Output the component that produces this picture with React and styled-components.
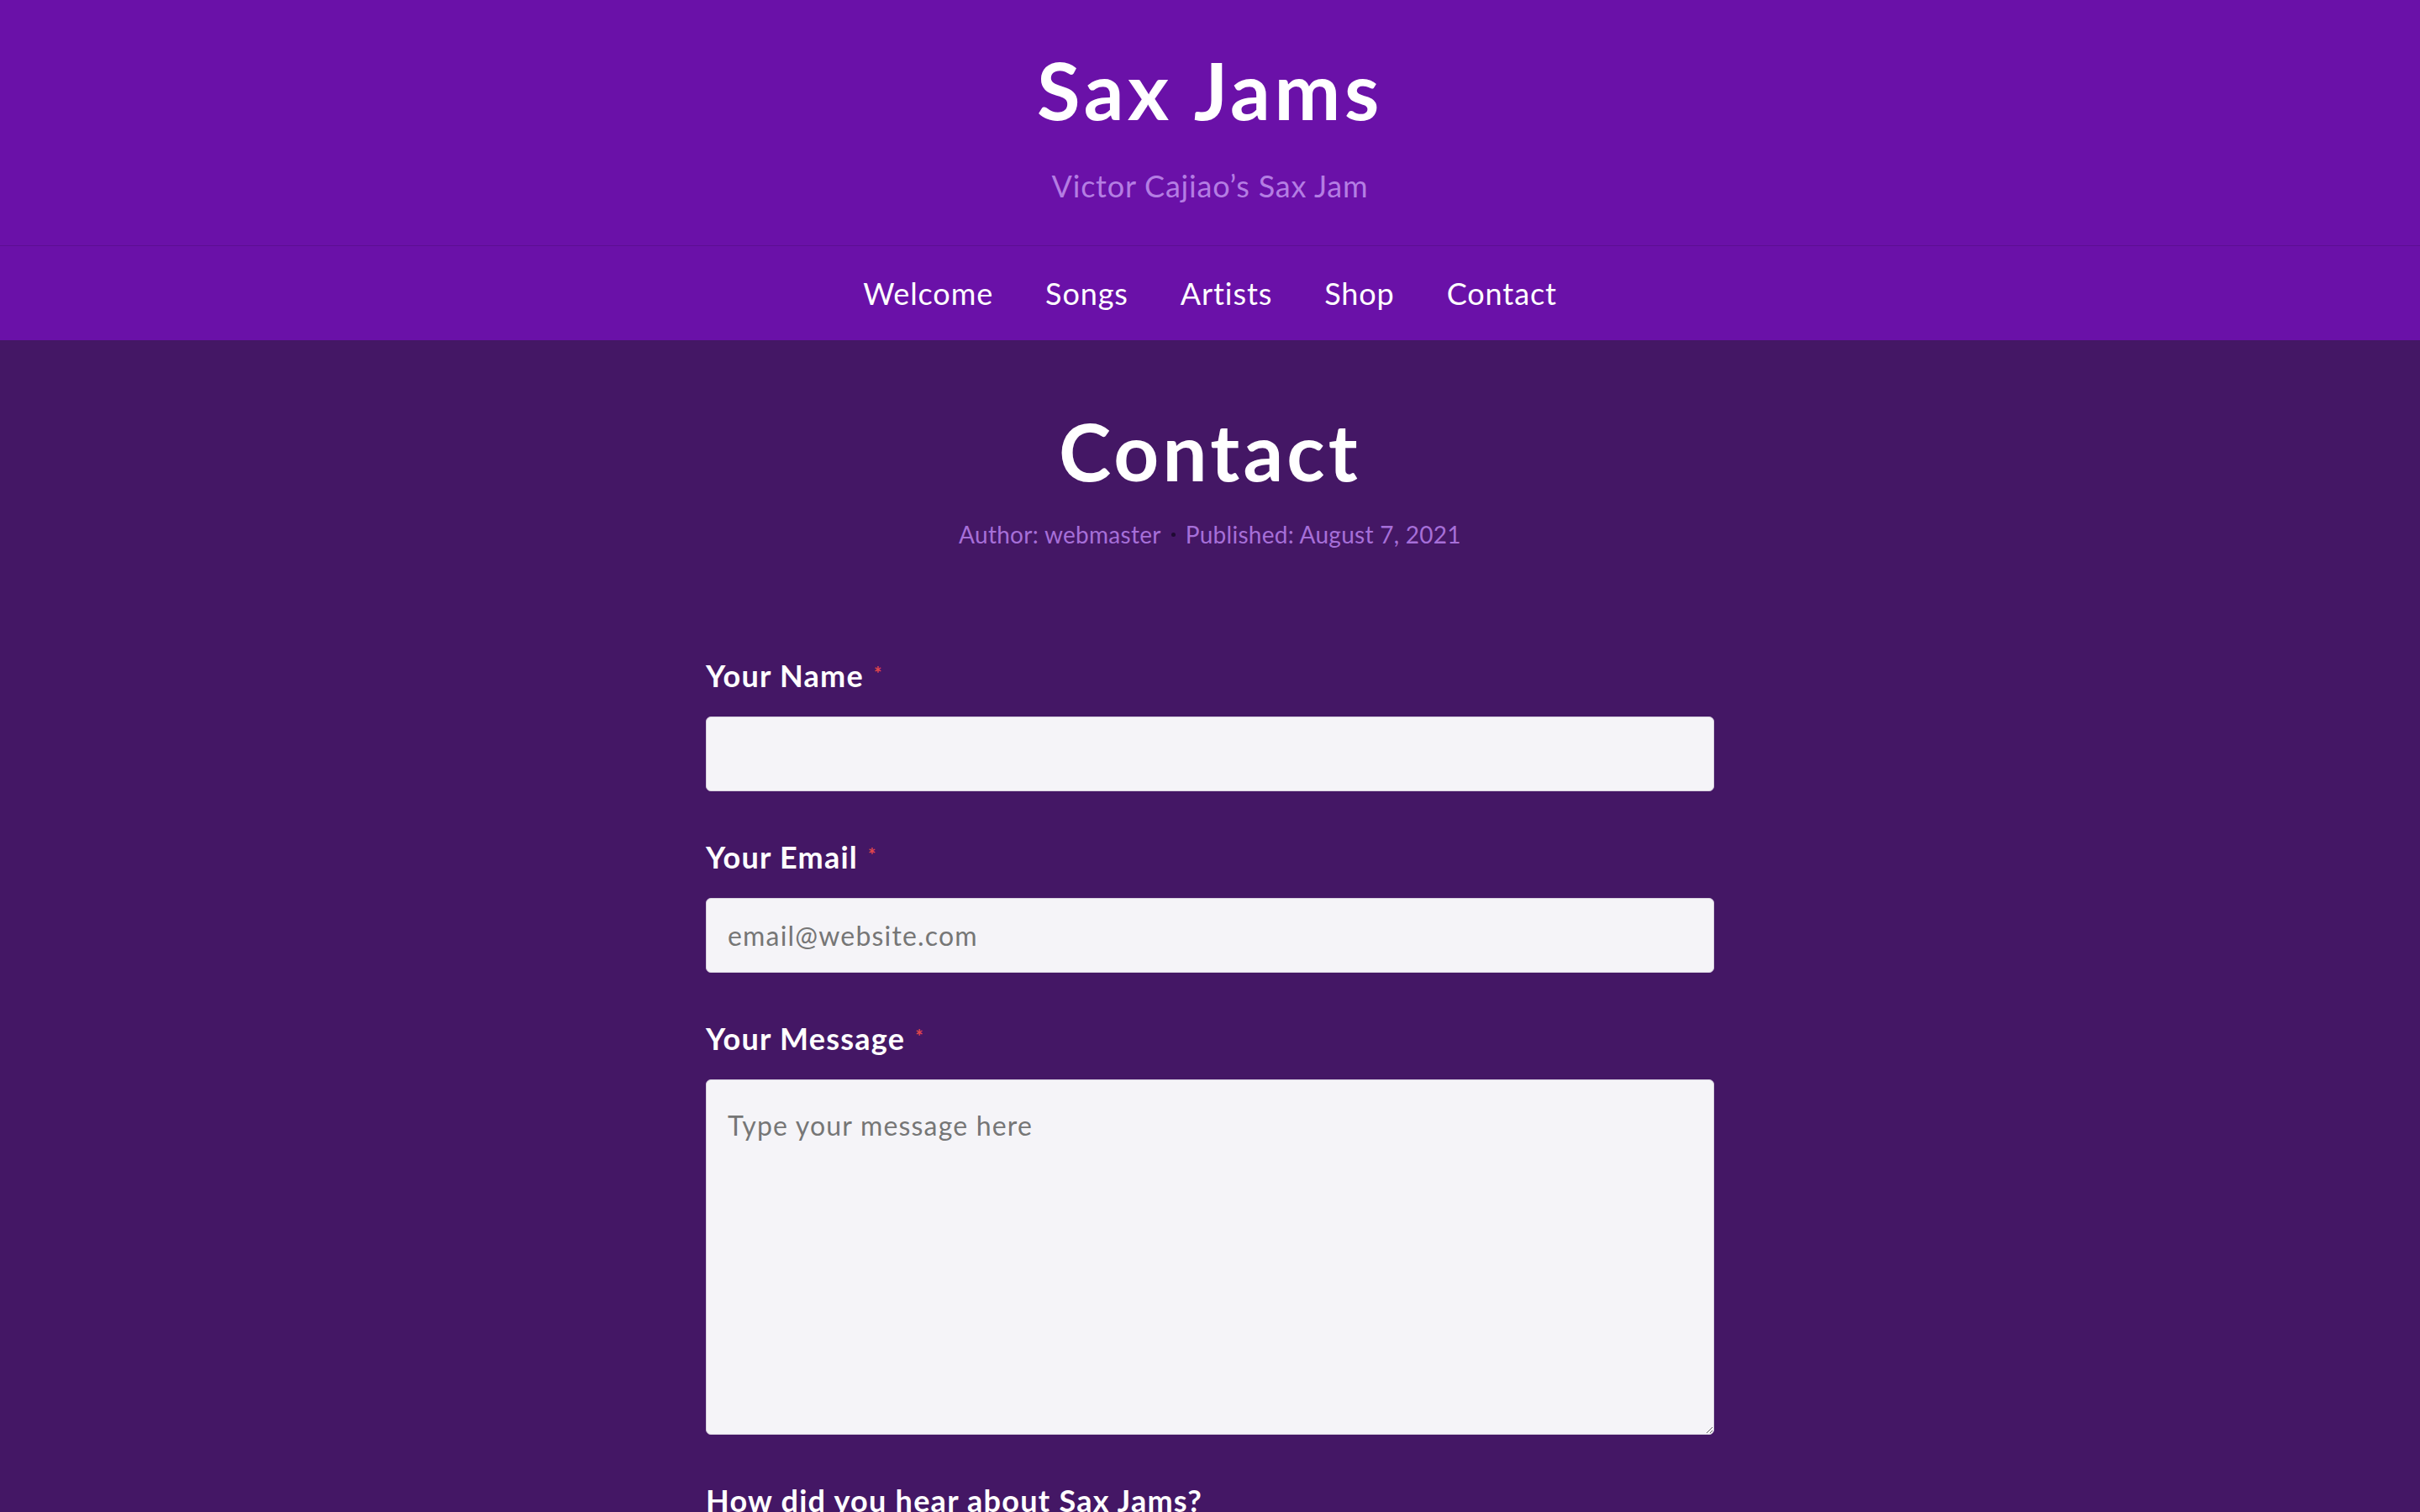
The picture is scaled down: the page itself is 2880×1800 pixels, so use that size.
import React from "react";
import styled, { createGlobalStyle } from "styled-components";

const Global = createGlobalStyle`
  html, body { margin: 0; padding: 0; }
  body {
    background: #441765;
    font-family: Lato, "Open Sans", sans-serif;
    color: #ffffff;
  }
  * { box-sizing: border-box; }
`;

const Header = styled.header`
  background: #6a11a8;
  text-align: center;
  padding: 50px 0 44px;
  border-bottom: 1px solid #5c0e92;
`;

const SiteTitle = styled.h1`
  margin: 0;
  font-size: 94px;
  line-height: 113px;
  font-weight: 700;
  letter-spacing: 0.05em;
  color: #ffffff;
`;

const Tagline = styled.p`
  margin: 31px 0 0;
  font-size: 36px;
  line-height: 54px;
  font-weight: 400;
  letter-spacing: 0.022em;
  color: #b47de3;
`;

const Nav = styled.nav`
  background: #6a11a8;
  display: flex;
  justify-content: center;
  gap: 62px;
  padding: 29px 0;
`;

const NavLink = styled.a`
  font-size: 36px;
  line-height: 54px;
  letter-spacing: 0.025em;
  color: #ffffff;
  text-decoration: none;
`;

const Main = styled.main`
  width: 1200px;
  margin: 0 auto;
  padding: 75px 0 120px;
`;

const PageTitle = styled.h2`
  margin: 0;
  text-align: center;
  font-size: 94px;
  line-height: 113px;
  font-weight: 700;
  letter-spacing: 0.045em;
`;

const Meta = styled.div`
  margin-top: 22px;
  display: flex;
  justify-content: center;
  align-items: center;
  gap: 12px;
  font-size: 28px;
  line-height: 42px;
  letter-spacing: 0.01em;
  color: #a66fd8;
`;

const Dot = styled.span`
  width: 5px;
  height: 5px;
  border-radius: 50%;
  background: #1f0a33;
`;

const Form = styled.form`
  margin-top: 120px;
  display: flex;
  flex-direction: column;
`;

const Field = styled.div`
  display: flex;
  flex-direction: column;
  margin-bottom: 51px;
`;

const Label = styled.label`
  font-size: 36px;
  line-height: 54px;
  font-weight: 700;
  letter-spacing: 0.035em;
  color: #ffffff;
  margin-bottom: 22px;
`;

const Req = styled.span`
  color: #e2474b;
  font-size: 22px;
  line-height: 22px;
  vertical-align: 8px;
  margin-left: 12px;
`;

const fieldBase = `
  width: 100%;
  border: 1px solid #d9d3e0;
  border-radius: 6px;
  background: #f5f4f8;
  font-family: Lato, "Open Sans", sans-serif;
  font-size: 32px;
  letter-spacing: 0.037em;
  color: #333;
  outline: none;
`;

const Input = styled.input`
  ${fieldBase}
  height: 89px;
  padding: 0 25px;
  &::placeholder { color: #767676; }
`;

const TextArea = styled.textarea`
  ${fieldBase}
  height: 423px;
  padding: 30px 25px;
  line-height: 48px;
  resize: vertical;
  &::placeholder { color: #767676; }
`;

const Select = styled.select`
  ${fieldBase}
  height: 89px;
  padding: 0 25px;
`;

export default function App() {
  return (
    <>
      <Global />
      <Header>
        <SiteTitle>Sax Jams</SiteTitle>
        <Tagline>Victor Cajiao’s Sax Jam</Tagline>
      </Header>
      <Nav>
        {["Welcome", "Songs", "Artists", "Shop", "Contact"].map((n) => (
          <NavLink key={n} href="#">{n}</NavLink>
        ))}
      </Nav>
      <Main>
        <PageTitle>Contact</PageTitle>
        <Meta>
          <span>Author: webmaster</span>
          <Dot />
          <span>Published: August 7, 2021</span>
        </Meta>
        <Form onSubmit={(e) => e.preventDefault()}>
          <Field>
            <Label htmlFor="name">Your Name<Req>*</Req></Label>
            <Input id="name" type="text" />
          </Field>
          <Field>
            <Label htmlFor="email">Your Email<Req>*</Req></Label>
            <Input id="email" type="email" placeholder="email@website.com" />
          </Field>
          <Field>
            <Label htmlFor="msg">Your Message<Req>*</Req></Label>
            <TextArea id="msg" placeholder="Type your message here" />
          </Field>
          <Field>
            <Label htmlFor="how">How did you hear about Sax Jams?</Label>
            <Select id="how" defaultValue="">
              <option value="">Select an option</option>
              <option>Friend</option>
              <option>Social media</option>
              <option>Search engine</option>
            </Select>
          </Field>
        </Form>
      </Main>
    </>
  );
}
